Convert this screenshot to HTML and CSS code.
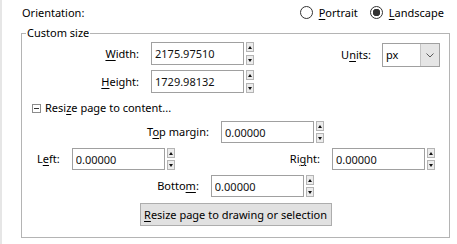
FILE: index.html
```html
<!DOCTYPE html>
<html lang="en">
<head>
  <meta charset="UTF-8" />
  <title>Custom size</title>
  <link rel="stylesheet" href="styles.css">
</head>
<body>

  <div class="panel">
    <div class="orient-row">
      <span>Orientation:</span>
      <div class="radios">
        <label class="radio"><input type="radio" name="orient"> <span><u>P</u>ortrait</span></label>
        <label class="radio"><input type="radio" name="orient" checked> <span><u>L</u>andscape</span></label>
      </div>
    </div>

    <fieldset class="custom">
      <legend>Custom size</legend>

      <div class="size-row first">
        <span class="size-label"><u>W</u>idth:</span>
        <input class="num size-input" type="text" value="2175.97510">
        <span class="spin"><i class="up"></i><i class="down"></i></span>
        <div class="units">
          <span>U<u>n</u>its:</span>
          <div class="combo">
            <span class="combo-value">px</span>
            <span class="combo-arrow">
              <svg width="8" height="5" viewBox="0 0 8 5"><path d="M0.5 0.5 L4 4 L7.5 0.5" fill="none" stroke="#5a5a5a" stroke-width="1"/></svg>
            </span>
          </div>
        </div>
      </div>

      <div class="size-row second">
        <span class="size-label"><u>H</u>eight:</span>
        <input class="num size-input" type="text" value="1729.98132">
        <span class="spin"><i class="up"></i><i class="down"></i></span>
      </div>

      <div class="expander">
        <svg width="9" height="9" viewBox="0 0 9 9"><rect x="0.5" y="0.5" width="8" height="8" fill="#fff" stroke="#8c8c8c"/><path d="M2 4.5 H7" stroke="#333" stroke-width="1"/></svg>
        <span>Resi<u>z</u>e page to content...</span>
      </div>

      <div class="margin-row centered top">
        <div class="field">
          <span>T<u>o</u>p margin:</span>
          <input class="num" type="text" value="0.00000">
          <span class="spin"><i class="up"></i><i class="down"></i></span>
        </div>
      </div>

      <div class="margin-row sides">
        <div class="field">
          <span>L<u>e</u>ft:</span>
          <input class="num" type="text" value="0.00000">
          <span class="spin"><i class="up"></i><i class="down"></i></span>
        </div>
        <div class="field">
          <span>Ri<u>g</u>ht:</span>
          <input class="num" type="text" value="0.00000">
          <span class="spin"><i class="up"></i><i class="down"></i></span>
        </div>
      </div>

      <div class="margin-row centered">
        <div class="field">
          <span>Botto<u>m</u>:</span>
          <input class="num" type="text" value="0.00000">
          <span class="spin"><i class="up"></i><i class="down"></i></span>
        </div>
      </div>

      <div class="button-row">
        <button class="resize-btn"><u>R</u>esize page to drawing or selection</button>
      </div>
    </fieldset>
  </div>

</body>
</html>
```

FILE: styles.css
```css
body {
  margin: 0;
  background: #fff;
  font-family: 'Noto Sans', 'DejaVu Sans', sans-serif;
  font-size: 11px;
  line-height: 16px;
  color: #000;
}

.panel {
  border-left: 2px solid #e6e6e6;
  height: 244px;
  box-sizing: border-box;
}

u {
  text-decoration: underline;
  text-underline-offset: 2px;
}

.orient-row {
  display: flex;
  align-items: center;
  justify-content: space-between;
  height: 25px;
  padding: 0 13px 0 20px;
}

.radios {
  display: flex;
  gap: 12px;
}

.radio {
  display: flex;
  align-items: center;
  gap: 6px;
}

.radio input {
  appearance: none;
  margin: 0;
  width: 13px;
  height: 13px;
  border: 1px solid #333;
  border-radius: 50%;
  background: #fff;
}

.radio input:checked {
  background: radial-gradient(circle, #333 0 3.5px, #fff 4px);
}

.custom {
  margin: 0 7px 0 19px;
  padding: 0 0 11px 0;
  border: 1px solid #b4b4b4;
  min-width: 0;
}

.custom legend {
  margin-left: 4px;
  padding: 0 1px;
  line-height: 16px;
}

.size-row {
  display: flex;
  align-items: center;
  height: 23px;
  padding-right: 9px;
}

.size-row.first {
  margin-top: 1px;
}

.size-row.second {
  margin-top: 5px;
}

.size-label {
  width: 117px;
  text-align: right;
  margin-right: 12px;
}

.num {
  box-sizing: border-box;
  width: 93px;
  height: 22px;
  border: 1px solid #a0a0a0;
  padding: 0 3px;
  font: inherit;
  color: #111;
  outline: none;
}

.size-input {
  height: 23px;
}

.spin {
  display: flex;
  flex-direction: column;
  justify-content: space-between;
  align-self: stretch;
  width: 8px;
  margin-left: 2px;
}

.spin i {
  position: relative;
  box-sizing: border-box;
  height: 10px;
  border: 1px solid #b4b4b4;
  background: #ececec;
}

.spin i::after {
  content: "";
  position: absolute;
  left: 1px;
  border-left: 2px solid transparent;
  border-right: 2px solid transparent;
}

.spin .up::after {
  top: 3px;
  border-bottom: 3px solid #111;
}

.spin .down::after {
  top: 3px;
  border-top: 3px solid #111;
}

.units {
  margin-left: auto;
  display: flex;
  align-items: center;
  gap: 11px;
  align-self: flex-start;
  margin-top: 1px;
}

.combo {
  box-sizing: border-box;
  display: flex;
  width: 58px;
  height: 24px;
  border: 1px solid #a0a0a0;
}

.combo-value {
  flex: 1;
  padding-left: 3px;
  line-height: 22px;
}

.combo-arrow {
  width: 18px;
  display: flex;
  align-items: center;
  justify-content: center;
  background: #e5e5e5;
  border-left: 1px solid #c4c4c4;
}

.expander {
  display: flex;
  align-items: center;
  gap: 4px;
  margin-top: 7px;
  padding-left: 10px;
  height: 16px;
}

.margin-row {
  display: flex;
  align-items: center;
  height: 22px;
  margin-top: 5px;
}

.margin-row.centered {
  justify-content: center;
}

.margin-row.sides {
  justify-content: space-between;
  padding: 0 14px 0 15px;
}

.field {
  display: flex;
  align-items: center;
  height: 22px;
}

.field > span:first-child {
  margin-right: 12px;
}

.button-row {
  display: flex;
  justify-content: center;
  margin-top: 6px;
}

.resize-btn {
  box-sizing: border-box;
  width: 192px;
  height: 23px;
  padding: 0;
  border: 1px solid #adadad;
  background: #e1e1e1;
  font: inherit;
  color: #000;
}
```
